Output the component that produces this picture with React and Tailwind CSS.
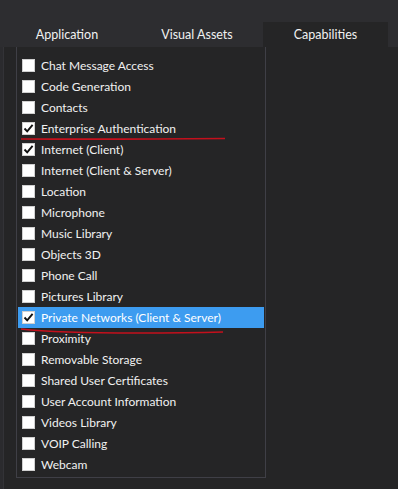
import React from 'react';

const capabilities = [
    { name: 'Chat Message Access', checked: false },
    { name: 'Code Generation', checked: false },
    { name: 'Contacts', checked: false },
    { name: 'Enterprise Authentication', checked: true },
    { name: 'Internet (Client)', checked: true },
    { name: 'Internet (Client & Server)', checked: false },
    { name: 'Location', checked: false },
    { name: 'Microphone', checked: false },
    { name: 'Music Library', checked: false },
    { name: 'Objects 3D', checked: false },
    { name: 'Phone Call', checked: false },
    { name: 'Pictures Library', checked: false },
    { name: 'Private Networks (Client & Server)', checked: true, selected: true },
    { name: 'Proximity', checked: false },
    { name: 'Removable Storage', checked: false },
    { name: 'Shared User Certificates', checked: false },
    { name: 'User Account Information', checked: false },
    { name: 'Videos Library', checked: false },
    { name: 'VOIP Calling', checked: false },
    { name: 'Webcam', checked: false },
];

const tabs = [
    { label: 'Application', width: 'w-[128px]' },
    { label: 'Visual Assets', width: 'w-[128px]' },
    { label: 'Capabilities', width: 'w-[125px]', active: true },
];

// Little white checkbox like the VS manifest designer
const CheckBox = ({ checked }) => (
    <div className="w-[13px] h-[13px] bg-white border border-[#d0d0d0] flex items-center justify-center shrink-0">
        {checked && (
            <svg width="11" height="11" viewBox="0 0 11 11">
                <path d="M1.5 5.5 L4.2 8.4 L9.6 1.8" fill="none" stroke="#111" strokeWidth="1.9" />
            </svg>
        )}
    </div>
);

const App = () => {
    return (
        <div
            className="w-[398px] h-[489px] bg-[#2b2b2e] flex flex-col overflow-hidden"
            style={{ fontFamily: 'Lato, "Noto Sans", sans-serif' }}
        >
            {/* tab strip */}
            <div className="h-[47px] flex items-end pl-[3px] gap-[2px] bg-[#2d2d30]">
                {tabs.map((tab) => (
                    <div
                        key={tab.label}
                        className={`${tab.width} h-[25px] flex items-center justify-center pt-[2px] text-[12.5px] ${
                            tab.active ? 'bg-[#252526] text-[#f1f1f1]' : 'text-[#f1f1f1]'
                        }`}
                    >
                        {tab.label}
                    </div>
                ))}
            </div>

            {/* page body */}
            <div className="flex-1 ml-[3px] bg-[#252526] border-l border-[#333337] pl-[12px]">
                <div className="relative w-[250px] h-[431px] border-l border-r border-b border-[#3f3f46] pt-[8px] px-[1px]">
                    {capabilities.map((cap) => (
                        <div
                            key={cap.name}
                            className={`h-[21px] flex items-center gap-[6px] pl-[4px] text-[12px] ${
                                cap.selected ? 'bg-[#3d9cf0] text-white' : 'text-[#f1f1f1]'
                            }`}
                        >
                            <CheckBox checked={cap.checked} />
                            <span>{cap.name}</span>
                        </div>
                    ))}

                    {/* red annotation underlines */}
                    <svg className="absolute left-0 top-0 pointer-events-none" width="250" height="431">
                        <path d="M4 92 Q100 92.5 208 91.5" fill="none" stroke="#c4101c" strokeWidth="1.6" />
                        <path d="M4 282 Q40 286 120 286 Q170 286 206 285" fill="none" stroke="#c4101c" strokeWidth="1.6" />
                    </svg>
                </div>
            </div>
        </div>
    );
};

export default App;
